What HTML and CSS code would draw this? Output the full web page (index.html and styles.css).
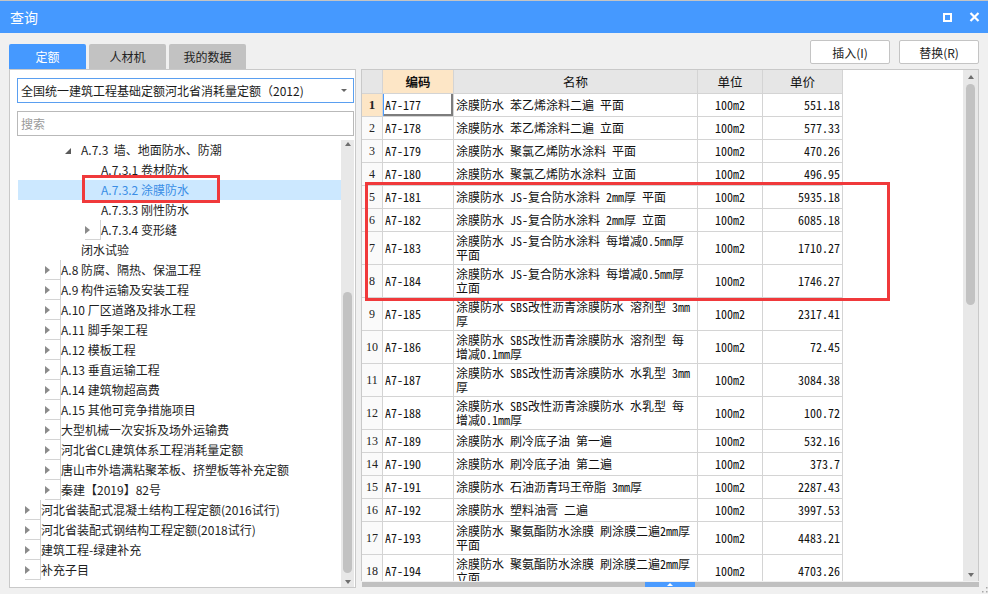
FILE: index.html
```html
<!DOCTYPE html>
<html lang="zh-CN">
<head>
<meta charset="utf-8">
<title>查询</title>
<link rel="stylesheet" href="styles.css">
</head>
<body>
<div class="window">
  <header class="titlebar">
    <span class="title">查询</span>
    <div class="win-btns">
      <svg class="ic" width="9" height="9" viewBox="0 0 9 9"><rect x="1" y="1" width="7" height="7" fill="none" stroke="#fff" stroke-width="2"/></svg>
      <svg class="ic" width="11" height="10" viewBox="0 0 11 10"><path d="M1.5 1L9.5 9M9.5 1L1.5 9" stroke="#fff" stroke-width="2.2" fill="none"/></svg>
    </div>
  </header>

  <div class="toolbar">
    <div class="tabs">
      <div class="tab active">定额</div>
      <div class="tab">人材机</div>
      <div class="tab">我的数据</div>
    </div>
    <div class="actions">
      <button class="btn">插入(I)</button>
      <button class="btn">替换(R)</button>
    </div>
  </div>

  <div class="main">
    <section class="left">
      <div class="select"><span>全国统一建筑工程基础定额河北省消耗量定额（2012)</span><span class="caret"></span></div>
      <div class="search">搜索</div>
      <div class="tree-wrap">
        <div class="tree">
          <div class="row l3"><span class="tg e"></span>A.7.3&nbsp; 墙、地面防水、防潮</div>
          <div class="row l4"><span class="tg"></span>A.7.3.1 卷材防水</div>
          <div class="row l4 sel"><span class="tg"></span>A.7.3.2 涂膜防水</div>
          <div class="row l4"><span class="tg"></span>A.7.3.3 刚性防水</div>
          <div class="row l4"><span class="tg c"></span>A.7.3.4 变形缝</div>
          <div class="row l3"><span class="tg"></span>闭水试验</div>
          <div class="row l2"><span class="tg c"></span>A.8 防腐、隔热、保温工程</div>
          <div class="row l2"><span class="tg c"></span>A.9 构件运输及安装工程</div>
          <div class="row l2"><span class="tg c"></span>A.10 厂区道路及排水工程</div>
          <div class="row l2"><span class="tg c"></span>A.11 脚手架工程</div>
          <div class="row l2"><span class="tg c"></span>A.12 模板工程</div>
          <div class="row l2"><span class="tg c"></span>A.13 垂直运输工程</div>
          <div class="row l2"><span class="tg c"></span>A.14 建筑物超高费</div>
          <div class="row l2"><span class="tg c"></span>A.15 其他可竞争措施项目</div>
          <div class="row l2"><span class="tg c"></span>大型机械一次安拆及场外运输费</div>
          <div class="row l2"><span class="tg c"></span>河北省CL建筑体系工程消耗量定额</div>
          <div class="row l2"><span class="tg c"></span>唐山市外墙满粘聚苯板、挤塑板等补充定额</div>
          <div class="row l2"><span class="tg c"></span>秦建【2019】82号</div>
          <div class="row l1"><span class="tg c"></span>河北省装配式混凝土结构工程定额(2016试行)</div>
          <div class="row l1"><span class="tg c"></span>河北省装配式钢结构工程定额(2018试行)</div>
          <div class="row l1"><span class="tg c"></span>建筑工程-绿建补充</div>
          <div class="row l1"><span class="tg c"></span>补充子目</div>
        </div>
        <div class="vscroll">
          <span class="arr-up"></span>
          <span class="thumb tree-thumb"></span>
          <span class="arr-down"></span>
        </div>
      </div>
    </section>

    <section class="right">
      <div class="grid-box">
        <div class="viewport">
          <div class="g-row g-head">
            <div class="c n"></div>
            <div class="c h hl">编码</div>
            <div class="c h">名称</div>
            <div class="c h">单位</div>
            <div class="c h">单价</div>
          </div>
          <div class="g-row cur">
            <div class="c n">1</div><div class="c code focus">A7-177</div><div class="c name">涂膜防水 苯乙烯涂料二遍 平面</div><div class="c unit">100m2</div><div class="c price">551.18</div>
          </div>
          <div class="g-row">
            <div class="c n">2</div><div class="c code">A7-178</div><div class="c name">涂膜防水 苯乙烯涂料二遍 立面</div><div class="c unit">100m2</div><div class="c price">577.33</div>
          </div>
          <div class="g-row">
            <div class="c n">3</div><div class="c code">A7-179</div><div class="c name">涂膜防水 聚氯乙烯防水涂料 平面</div><div class="c unit">100m2</div><div class="c price">470.26</div>
          </div>
          <div class="g-row">
            <div class="c n">4</div><div class="c code">A7-180</div><div class="c name">涂膜防水 聚氯乙烯防水涂料 立面</div><div class="c unit">100m2</div><div class="c price">496.95</div>
          </div>
          <div class="g-row">
            <div class="c n">5</div><div class="c code">A7-181</div><div class="c name">涂膜防水 JS-复合防水涂料 2mm厚 平面</div><div class="c unit">100m2</div><div class="c price">5935.18</div>
          </div>
          <div class="g-row">
            <div class="c n">6</div><div class="c code">A7-182</div><div class="c name">涂膜防水 JS-复合防水涂料 2mm厚 立面</div><div class="c unit">100m2</div><div class="c price">6085.18</div>
          </div>
          <div class="g-row t2">
            <div class="c n">7</div><div class="c code">A7-183</div><div class="c name"><span class="ln">涂膜防水 JS-复合防水涂料 每增减0.5mm厚</span><span class="ln">平面</span></div><div class="c unit">100m2</div><div class="c price">1710.27</div>
          </div>
          <div class="g-row t2">
            <div class="c n">8</div><div class="c code">A7-184</div><div class="c name"><span class="ln">涂膜防水 JS-复合防水涂料 每增减0.5mm厚</span><span class="ln">立面</span></div><div class="c unit">100m2</div><div class="c price">1746.27</div>
          </div>
          <div class="g-row t2">
            <div class="c n">9</div><div class="c code">A7-185</div><div class="c name"><span class="ln">涂膜防水 SBS改性沥青涂膜防水 溶剂型 3mm</span><span class="ln">厚</span></div><div class="c unit">100m2</div><div class="c price">2317.41</div>
          </div>
          <div class="g-row t2">
            <div class="c n">10</div><div class="c code">A7-186</div><div class="c name"><span class="ln">涂膜防水 SBS改性沥青涂膜防水 溶剂型 每</span><span class="ln">增减0.1mm厚</span></div><div class="c unit">100m2</div><div class="c price">72.45</div>
          </div>
          <div class="g-row t2">
            <div class="c n">11</div><div class="c code">A7-187</div><div class="c name"><span class="ln">涂膜防水 SBS改性沥青涂膜防水 水乳型 3mm</span><span class="ln">厚</span></div><div class="c unit">100m2</div><div class="c price">3084.38</div>
          </div>
          <div class="g-row t2">
            <div class="c n">12</div><div class="c code">A7-188</div><div class="c name"><span class="ln">涂膜防水 SBS改性沥青涂膜防水 水乳型 每</span><span class="ln">增减0.1mm厚</span></div><div class="c unit">100m2</div><div class="c price">100.72</div>
          </div>
          <div class="g-row">
            <div class="c n">13</div><div class="c code">A7-189</div><div class="c name">涂膜防水 刷冷底子油 第一遍</div><div class="c unit">100m2</div><div class="c price">532.16</div>
          </div>
          <div class="g-row">
            <div class="c n">14</div><div class="c code">A7-190</div><div class="c name">涂膜防水 刷冷底子油 第二遍</div><div class="c unit">100m2</div><div class="c price">373.7</div>
          </div>
          <div class="g-row">
            <div class="c n">15</div><div class="c code">A7-191</div><div class="c name">涂膜防水 石油沥青玛王帝脂 3mm厚</div><div class="c unit">100m2</div><div class="c price">2287.43</div>
          </div>
          <div class="g-row">
            <div class="c n">16</div><div class="c code">A7-192</div><div class="c name">涂膜防水 塑料油膏 二遍</div><div class="c unit">100m2</div><div class="c price">3997.53</div>
          </div>
          <div class="g-row t2">
            <div class="c n">17</div><div class="c code">A7-193</div><div class="c name"><span class="ln">涂膜防水 聚氨酯防水涂膜 刷涂膜二遍2mm厚</span><span class="ln">平面</span></div><div class="c unit">100m2</div><div class="c price">4483.21</div>
          </div>
          <div class="g-row t2">
            <div class="c n">18</div><div class="c code">A7-194</div><div class="c name"><span class="ln">涂膜防水 聚氨酯防水涂膜 刷涂膜二遍2mm厚</span><span class="ln">立面</span></div><div class="c unit">100m2</div><div class="c price">4703.26</div>
          </div>
        </div>
        <div class="vbar">
          <span class="arr-up"></span>
          <span class="thumb grid-thumb"></span>
          <span class="arr-down"></span>
        </div>
      </div>
      <div class="hbar"><span class="hthumb"><span class="hthumb-arr"></span></span></div>
    </section>
  </div>

  <div class="mark mark-tree"></div>
  <div class="mark mark-table"></div>
  <svg class="grip" width="6" height="6" viewBox="0 0 6 6"><rect x="4" y="0" width="1.5" height="1.5" fill="#a8a8a8"/><rect x="4" y="4" width="1.5" height="1.5" fill="#a8a8a8"/><rect x="0" y="4" width="1.5" height="1.5" fill="#a8a8a8"/></svg>
</div>
</body>
</html>
```

FILE: styles.css
```css
* { box-sizing: border-box; }
html, body { margin: 0; padding: 0; }
body {
  background: #f0f0f0;
  font-family: "Noto Sans CJK SC", "Microsoft YaHei", sans-serif;
  color: #1e1e1e;
}
.window {
  position: relative;
  width: 988px;
  height: 594px;
  overflow: hidden;
  background: #f0f0f0;
}

/* title bar */
.titlebar {
  height: 33px;
  background: #4599ff;
  border-top: 1px solid #c4c4c4;
  display: flex;
  align-items: center;
  justify-content: space-between;
  padding: 0 8px 0 10px;
  color: #fff;
}
.title { font-size: 14px; line-height: 1; }
.win-btns { display: flex; align-items: center; gap: 17px; }
.ic { display: block; }

/* toolbar */
.toolbar {
  height: 36px;
  display: flex;
  justify-content: space-between;
  padding: 0 9px 0 9px;
}
.tabs { display: flex; gap: 3px; align-self: flex-end; }
.tab {
  width: 77px;
  height: 25px;
  background: #c2c2c2;
  color: #222;
  font-size: 12px;
  display: flex;
  align-items: center;
  justify-content: center;
  border-radius: 2px 2px 0 0;
}
.tab.active { background: #4599ff; color: #fff; }
.actions { display: flex; gap: 9px; padding-top: 7px; }
.btn {
  width: 80px;
  height: 24px;
  background: #fff;
  border: 1px solid #c4c4c4;
  border-radius: 2px;
  font-family: "Noto Sans CJK SC", sans-serif;
  font-size: 12px;
  color: #222;
  padding: 0;
}

/* main */
.main {
  display: flex;
  height: 519px;
  padding-left: 9px;
  gap: 5px;
}

/* left panel */
.left {
  width: 347px;
  height: 519px;
  background: #fff;
  border: 1px solid #c9c9c9;
  padding: 8px 1px 0 7px;
  display: flex;
  flex-direction: column;
}
.select {
  height: 25px;
  flex: none;
  border: 1px solid #5a9ff0;
  display: flex;
  align-items: center;
  padding-left: 3px;
  font-size: 12px;
  color: #1a1a1a;
  white-space: nowrap;
}
.caret {
  margin-left: auto;
  margin-right: 6px;
  width: 0;
  height: 0;
  border-top: 3px solid #666;
  border-left: 3px solid transparent;
  border-right: 3px solid transparent;
}
.search {
  height: 25px;
  flex: none;
  margin-top: 8px;
  border: 1px solid #b9b9b9;
  display: flex;
  align-items: center;
  padding-left: 3px;
  font-size: 12px;
  color: #9a9a9a;
}
.tree-wrap {
  margin-top: 4px;
  flex: 1;
  display: flex;
  overflow: hidden;
}
.tree {
  flex: 1;
  margin-left: 1px;
  overflow: hidden;
}
.row {
  height: 20px;
  line-height: 20px;
  display: flex;
  align-items: center;
  font-size: 12px;
  color: #1e1e1e;
  white-space: nowrap;
}
.row.l1 { padding-left: 7px; }
.row.l2 { padding-left: 27px; }
.row.l3 { padding-left: 47px; }
.row.l4 { padding-left: 67px; }
.row.sel { background: #cce8ff; color: #3a8ee6; }
.tg {
  flex: none;
  width: 16px;
  height: 20px;
  display: flex;
  align-items: center;
}
.tg.c::before {
  content: "";
  width: 0;
  height: 0;
  border-left: 5px solid #8b8b8b;
  border-top: 4px solid transparent;
  border-bottom: 4px solid transparent;
}
.tg.e::before {
  content: "";
  width: 0;
  height: 0;
  margin-top: 2px;
  border-bottom: 6px solid #5a5a5a;
  border-left: 6px solid transparent;
}

/* scrollbars */
.vscroll {
  width: 13px;
  flex: none;
  background: #e8e8e8;
  display: flex;
  flex-direction: column;
  align-items: center;
}
.arr-up {
  flex: none;
  width: 0;
  height: 0;
  border-bottom: 4px solid #6e6e6e;
  border-left: 3.5px solid transparent;
  border-right: 3.5px solid transparent;
}
.arr-down {
  flex: none;
  width: 0;
  height: 0;
  border-top: 4px solid #6e6e6e;
  border-left: 3.5px solid transparent;
  border-right: 3.5px solid transparent;
}
.thumb {
  flex: none;
  width: 9px;
  background: #c2c2c2;
  border-radius: 5px;
}
.vscroll .arr-up { margin-top: 2px; }
.tree-thumb { margin-top: 146px; height: 281px; }
.vscroll .arr-down { margin-top: 7px; }

/* right panel */
.right {
  width: 618px;
  display: flex;
  flex-direction: column;
}
.grid-box {
  height: 512px;
  flex: none;
  border: 1px solid #c9c9c9;
  border-bottom: none;
  display: flex;
  background: #fff;
}
.viewport {
  flex: 1;
  overflow: hidden;
  background: #fff;
  font-family: "Noto Sans Mono CJK SC", "Noto Sans CJK SC", monospace;
  font-size: 12px;
  color: #111;
}
.vbar {
  width: 15px;
  flex: none;
  background: #e8e8e8;
  display: flex;
  flex-direction: column;
  align-items: center;
}
.vbar .arr-up { margin-top: 5px; }
.grid-thumb { margin-top: 5px; height: 221px; }
.vbar .arr-down { margin-top: auto; margin-bottom: 4px; }

.hbar {
  height: 5px;
  margin: 1px 0 0 1px;
  background: #c0c0c0;
  display: flex;
}
.hthumb {
  margin-left: 283px;
  width: 50px;
  height: 5px;
  background: #4a9bff;
  display: flex;
  justify-content: center;
  align-items: center;
}
.hthumb-arr {
  width: 0;
  height: 0;
  border-bottom: 3px solid #fff;
  border-left: 3px solid transparent;
  border-right: 3px solid transparent;
}

/* grid */
.g-row {
  display: grid;
  grid-template-columns: 21px 71px 244px 65px 80px;
  height: 23px;
}
.g-row.g-head { height: 24px; }
.g-row.t2 { height: 33px; }
.c {
  border-right: 1px solid #d4d4d4;
  border-bottom: 1px solid #d4d4d4;
  display: flex;
  align-items: center;
  overflow: hidden;
  white-space: nowrap;
  line-height: 14px;
}
.c.n {
  justify-content: center;
  font-family: "Liberation Serif", serif;
  font-size: 12px;
  color: #222;
  background: #fafafa;
}
.g-head .c { background: #e6e6e6; }
.c.h { justify-content: center; font-size: 12.5px; }
.c.h.hl { background: #fde6c6; font-weight: bold; }
.cur .c.n { background: #fde6c6; font-weight: bold; font-size: 13px; }
.c.code { padding-left: 2px; }
.c.focus {
  box-shadow: inset 1px 0 0 #4a9bff, inset -2px -2px 0 #7d7d7d;
}
.c.name { padding-left: 2px; }
.t2 .c.name {
  flex-direction: column;
  align-items: flex-start;
  padding-top: 2px;
}
.ln {
  display: block;
  height: 14px;
  line-height: 14px;
}
.c.unit { justify-content: center; }
.c.price { justify-content: flex-end; padding-right: 2px; }

/* annotations */
.mark {
  position: absolute;
  border: 3px solid #f0393b;
  pointer-events: none;
}
.mark-tree { left: 82px; top: 175px; width: 138px; height: 28px; }
.mark-table { left: 365px; top: 182px; width: 525px; height: 119px; }
.grip { position: absolute; left: 982px; top: 587px; }
```
